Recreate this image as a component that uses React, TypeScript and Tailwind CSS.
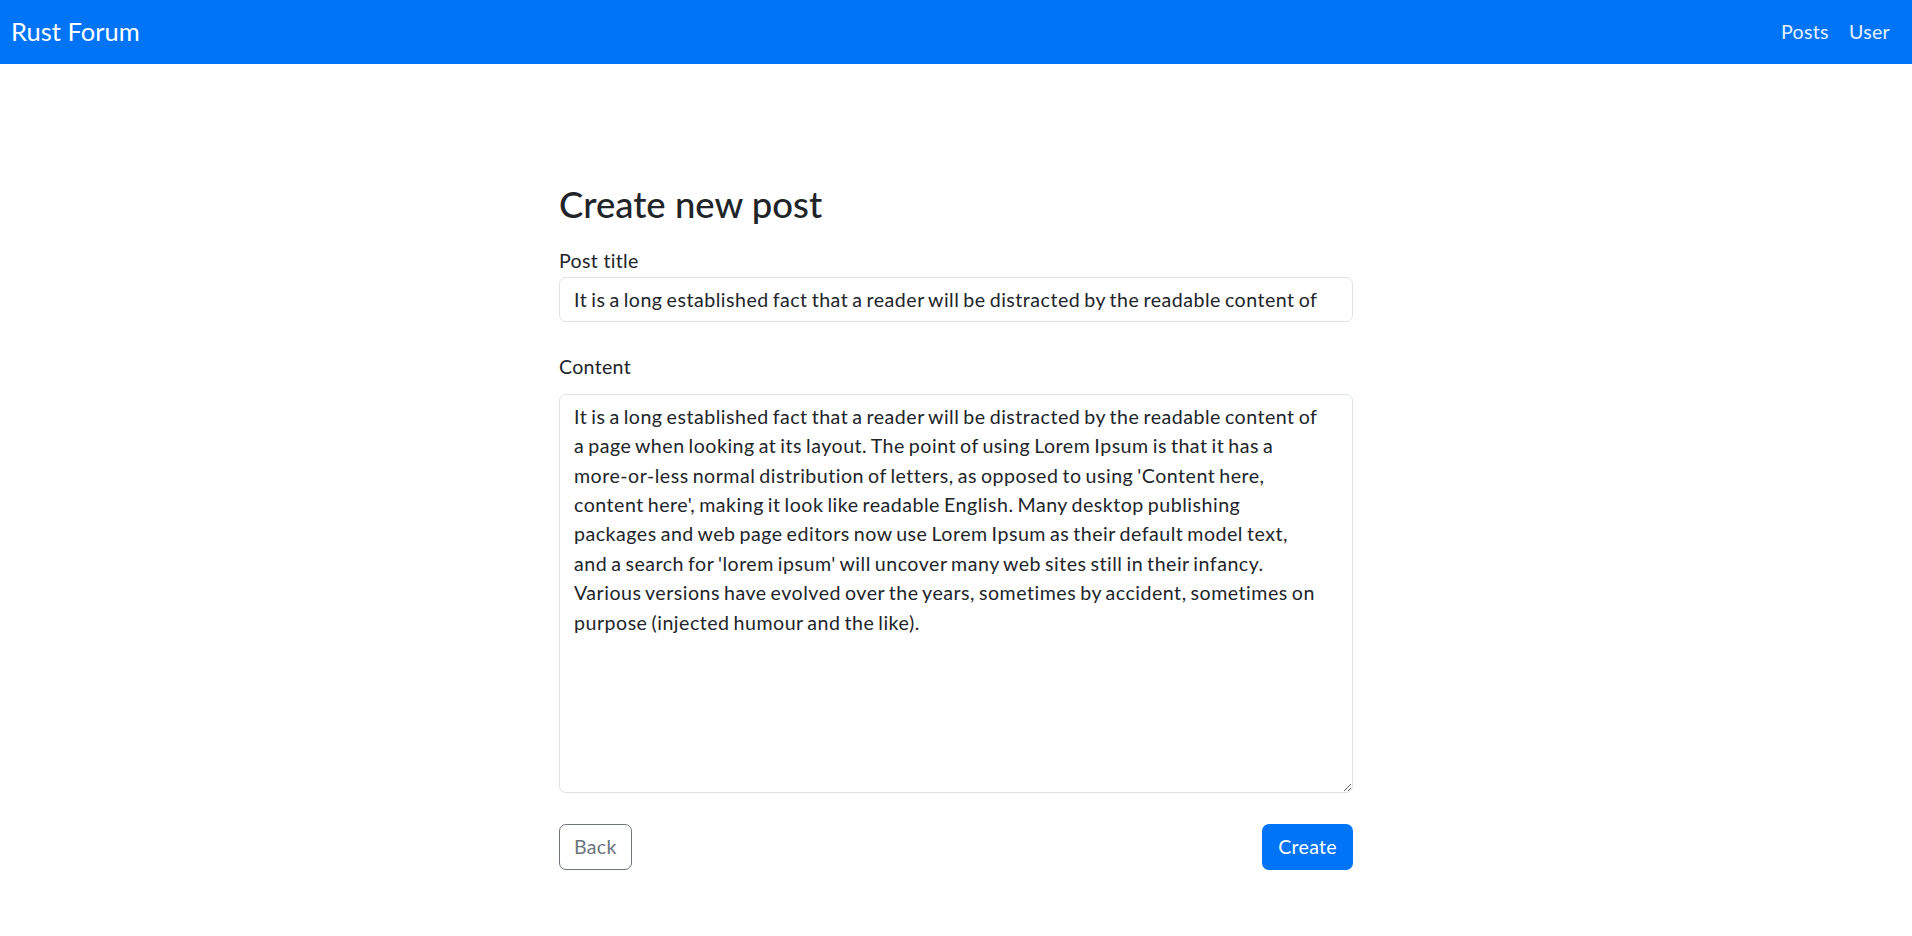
import React from 'react';

const LOREM =
  "It is a long established fact that a reader will be distracted by the readable content of a page when looking at its layout. The point of using Lorem Ipsum is that it has a more-or-less normal distribution of letters, as opposed to using 'Content here, content here', making it look like readable English. Many desktop publishing packages and web page editors now use Lorem Ipsum as their default model text, and a search for 'lorem ipsum' will uncover many web sites still in their infancy. Various versions have evolved over the years, sometimes by accident, sometimes on purpose (injected humour and the like).";

const TITLE = "It is a long established fact that a reader will be distracted by the readable content of";

const Navbar = () => (
  <nav className="h-[64px] bg-[#0074f7] flex items-center justify-between pl-[11px] pr-[22px]">
    <a className="text-white text-[25.5px] leading-none cursor-pointer">Rust Forum</a>
    <div className="flex items-center gap-[20px] text-[19.6px] tracking-[0.3px] text-white/90">
      <a className="cursor-pointer">Posts</a>
      <a className="cursor-pointer">User</a>
    </div>
  </nav>
);

export default function App() {
  return (
    <div className="min-h-screen bg-white text-[#212529] font-['Lato',sans-serif] text-[19.6px]">
      <Navbar />
      <main className="w-[794px] mx-auto tracking-[0.3px]">
        <h2 className="mt-[117px] mb-[18px] text-[36.5px] leading-[47px] font-medium tracking-normal">Create new post</h2>

        <label className="block leading-[29.4px] mb-[2px]">Post title</label>
        <input
          type="text"
          defaultValue={TITLE}
          className="block w-full h-[45px] pl-[14px] pr-[30px] border border-[#dee2e6] rounded-[7px] leading-[29.4px] tracking-[0.5px] [word-spacing:-1.5px] outline-none"
        />

        <label className="block leading-[29.4px] mt-[30px] mb-[12px]">Content</label>
        <textarea
          defaultValue={LOREM}
          className="block w-full h-[399px] pl-[14px] pr-[30px] py-[7px] border border-[#dee2e6] rounded-[7px] leading-[29.4px] tracking-[0.5px] [word-spacing:-1.5px] outline-none"
        />

        <div className="mt-[31px] flex justify-between">
          <button className="h-[46px] px-[14px] border border-[#6c757d] text-[#6c757d] rounded-[7px]">Back</button>
          <button className="h-[46px] px-[16px] bg-[#0074f7] text-white rounded-[7px]">Create</button>
        </div>
      </main>
    </div>
  );
}
